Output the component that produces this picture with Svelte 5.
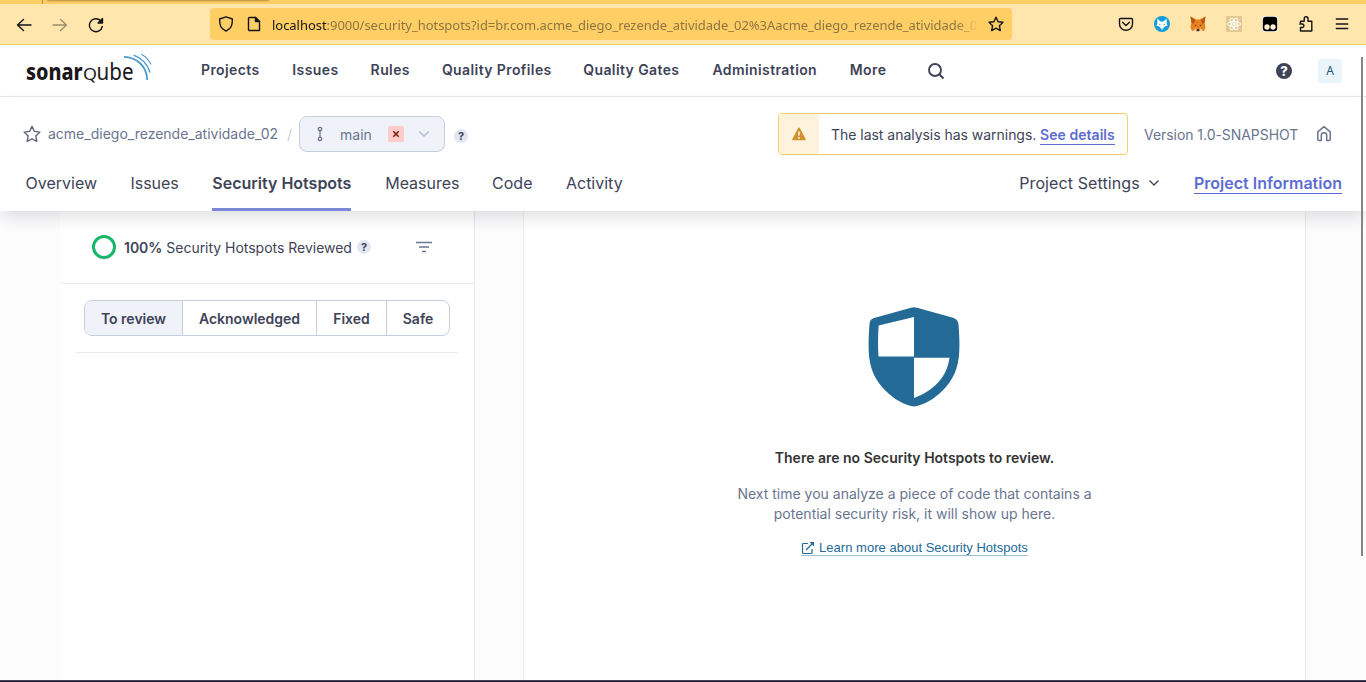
<script>
  const nav = [
    ['Projects', 59], ['Issues', 46], ['Rules', 39], ['Quality Profiles', 109],
    ['Quality Gates', 97], ['Administration', 105], ['More', 36]
  ];
  const tabs = [
    ['Overview', 71], ['Issues', 48], ['Security Hotspots', 139], ['Measures', 73], ['Code', 40], ['Activity', 57]
  ];
  const filters = [['To review', 97], ['Acknowledged', 134], ['Fixed', 70], ['Safe', 63]];
  const star = 'M8 1.2l2.1 4.5 4.9.6-3.6 3.4.9 4.9L8 12.2l-4.3 2.4.9-4.9L1 6.3l4.9-.6z';
</script>

<div class="page">
  <div class="tabstrip"><i></i><b></b></div>
  <div class="toolbar">
    <svg class="back" width="16" height="16" viewBox="0 0 16 16"><path d="M15 8H1.5M7.500 2.500L1.500 8l6 5.500" /></svg>
    <svg class="forward" width="16" height="16" viewBox="0 0 16 16"><path d="M1 8h13.5M8.500 2.500l6 5.500-6 5.500" /></svg>
    <svg class="reload" width="16" height="16" viewBox="0 0 16 16"><path d="M14.300 9.500A6.500 6.500 0 1 1 12.500 3.600" /><path class="solid" d="M14.500 1.500v4.500H10z" /></svg>
    <div class="urlbar">
      <svg width="16" height="16" viewBox="0 0 16 16"><path d="M8 .8L14.400 3c0 6-.6 9.500-6.400 12.200C2.200 12.500 1.600 9 1.600 3z" /></svg>
      <svg class="doc" width="16" height="16" viewBox="0 0 16 16"><path d="M3.500 1.500h6l4 4v9h-10a1 1 0 0 1-1-1v-11a1 1 0 0 1 1-1z" /><path class="solid" d="M9.500 1.500v4h4z" /></svg>
      <span class="url"><em>localhost</em>:9000/security_hotspots?id=br.com.acme_diego_rezende_atividade_02%3Aacme_diego_rezende_atividade_0</span>
      <svg class="bookmark" width="16" height="16" viewBox="0 0 16 16"><path d={star} /></svg>
    </div>
    <div class="extensions">
      <svg width="16" height="16" viewBox="0 0 16 16"><path d="M2.500 2.500h11a1 1 0 0 1 1 1V8a6.500 6.200 0 0 1-13 0V3.500a1 1 0 0 1 1-1zM4.500 6.300L8 9.500l3.500-3.200" /></svg>
      <svg width="16" height="16" viewBox="0 0 16 16"><circle class="plain" cx="8" cy="8" r="8" fill="#129bdb" /><path class="plain" fill="#fff" d="M3.300 2.500L6.500 5.500h3l3.200-3V8l1 1.500-3 1L8 14l-2.700-3.500-3-1 1-1.500z" /><path class="plain" fill="#129bdb" d="M4.800 7.500l2.200 1.500-1.200.6zM11.200 7.500L9 9l1.200.6zM7.400 11.800h1.200L8 13z" /></svg>
      <svg width="16" height="16" viewBox="0 0 16 16"><path class="plain" fill="#e8821e" d="M.5.5l6 3h3l6-3-.8 6 .8 5-1.500 3.500-3.500-1L9 15.500H7L5.500 14 2 15 .5 11.500l.8-5z" /><path class="plain" fill="#b85319" d="M.5.5l4.800 3.700L3.500 8l-2-1.500zM15.500.5l-4.800 3.700L12.500 8l2-1.500z" /><path class="plain" fill="#efc5a0" d="M3.500 14l2.500-2 1 3zM12.500 14L10 12l-1 3z" /><path class="plain" fill="#29313b" d="M4.500 8.500l2 1-1 .7zM11.500 8.500l-2 1 1 .7zM7 13h2l.5 2h-3z" /></svg>
      <svg width="16" height="16" viewBox="0 0 16 16"><path class="plain" fill="#e2c98f" d="M0 0h16v16H0z" /><g class="atom"><ellipse cx="8" cy="8" rx="6.500" ry="2.500" /><ellipse cx="8" cy="8" rx="6.500" ry="2.500" transform="rotate(60 8 8)" /><ellipse cx="8" cy="8" rx="6.500" ry="2.500" transform="rotate(120 8 8)" /></g><circle class="plain" cx="8" cy="8" r="1.400" fill="#fff" /></svg>
      <svg width="16" height="16" viewBox="0 0 16 16"><rect class="plain" width="16" height="16" rx="3" fill="#fff" /><rect class="plain" x=".8" y=".8" width="14.400" height="14.400" rx="3" fill="#000" /><circle class="plain" cx="5" cy="11" r="2.700" fill="#fff0cf" /><circle class="plain" cx="11" cy="11" r="2.700" fill="#fff0cf" /></svg>
      <svg width="16" height="16" viewBox="0 0 16 16"><path d="M2.500 7.200V5.300h3.700V2.700a1.900 1.900 0 0 1 3.800 0v2.600h3.800v9.700H2.500v-3.500h1.700a1.700 1.700 0 0 0 0-3.500H1.800" /></svg>
      <svg width="16" height="16" viewBox="0 0 16 16"><path d="M2.300 3h11.400M2.300 8h11.400M2.300 12.500h11.400" /></svg>
    </div>
  </div>

  <header class="global">
    <svg class="logo" width="128" height="36" viewBox="0 0 128 36">
      <text class="heavy" x="1" y="29" textLength="56.500" lengthAdjust="spacingAndGlyphs">sonar</text>
      <text class="round" x="58" y="29" textLength="14" lengthAdjust="spacingAndGlyphs">Q</text>
      <text x="71.500" y="29" textLength="37" lengthAdjust="spacingAndGlyphs">ube</text>
      <g><path stroke-width="1.800" d="M99 5.800C112 6.200 122 15.500 122.200 29" /><path stroke-width="1.400" d="M108.500 4.200C116.500 7 122.500 13 125 21.500" /><path stroke-width="1.100" d="M116.500 3.300C121 6 124 9.500 126 13.500" /></g>
    </svg>
    <nav>{#each nav as [label, width]}<a style:width="{width}px">{label}</a>{/each}</nav>
    <svg class="search" width="18" height="18" viewBox="0 0 18 18"><circle cx="8" cy="8" r="6" /><path d="M12.500 12.500L16.500 16.500" /></svg>
    <span class="help">?</span>
    <span class="avatar">A</span>
  </header>

  <section class="project">
    <div class="crumbs">
      <svg class="fav" width="18" height="18" viewBox="0 0 16 16"><path d={star} /></svg>
      <span class="name">acme_diego_rezende_atividade_02</span>
      <span class="slash">/</span>
      <div class="branch">
        <svg class="fork" width="8" height="16" viewBox="0 0 8 16"><circle cx="4" cy="3" r="1.700" /><circle cx="4" cy="13" r="1.700" /><path d="M4 4.700v6.600" /></svg>
        <span>main</span>
        <i class="failed"><svg width="8" height="8" viewBox="0 0 8 8"><path d="M1.300 1.300l5.400 5.400M6.700 1.300L1.300 6.700" /></svg></i>
        <svg class="chev" width="12" height="8" viewBox="0 0 12 8"><path d="M1.200 1.500L6 6l4.800-4.500" /></svg>
      </div>
      <span class="hint">?</span>
      <div class="warning">
        <div class="mark"><svg width="14" height="14" viewBox="0 0 14 14"><path fill="#d0932f" d="M6.300.8a.8.8 0 0 1 1.400 0l5.900 11.300a.8.8 0 0 1-.7 1.200H1.100a.8.800 0 0 1-.7-1.200z" /><path stroke="#fdf3dc" stroke-width="1.600" d="M7 4.500v4M7 10v1.700" /></svg></div>
        <p>The last analysis has warnings.</p><a>See details</a>
      </div>
      <span class="version">Version 1.0-SNAPSHOT</span>
      <svg class="home" width="16" height="18" viewBox="0 0 16 18"><path d="M1.800 6.800L8 1.700l6.200 5.100v7.700a1 1 0 0 1-1 1h-2.500V10.500A2.700 2.700 0 0 0 5.300 10.500v5H2.800a1 1 0 0 1-1-1z" /></svg>
    </div>
    <div class="tabs">
      {#each tabs as [label, width]}<a class:active={label === 'Security Hotspots'} style:width="{width}px">{label}</a>{/each}
      <span class="settings">Project Settings</span>
      <svg class="down" width="12" height="8" viewBox="0 0 12 8"><path d="M1.500 1.500L6 6l4.500-4.500" /></svg>
      <a class="info">Project Information</a>
    </div>
  </section>

  <main>
    <aside>
      <div class="reviewed"><i class="ring"></i><span><strong>100%</strong> Security Hotspots Reviewed</span><span class="hint">?</span>
        <svg width="16" height="12" viewBox="0 0 16 12"><path d="M0 1.500h16M3 6h10M6 10.500h4" /></svg>
      </div>
      <div class="toggles">{#each filters as [label, width], i}<span class:selected={i === 0} style:width="{width}px">{label}</span>{/each}</div>
      <hr />
    </aside>
    <article>
      <svg class="shield" width="92" height="100" viewBox="0 0 92 100"><path fill="#236a97" d="M43 .8q3-1 6 0L85 10.700q5 1.500 5.500 6.500C93 50 91 64 78 80 69 90 60 96 49 99q-3 .8-6 0C32 96 23 90 14 80 1 64-1 50 1.500 17.200 2 12.200 4 11.700 7 10.700z" /><path fill="#fff" d="M46 10v39.500H10.500C9.800 40 10 30 10.600 18.500zM46 50.700h35.500C79 70 66 83.500 46 91z" /></svg>
      <h3>There are no Security Hotspots to review.</h3>
      <p><span>Next time you analyze a piece of code that contains a</span><br /><span>potential security risk, it will show up here.</span></p>
      <a><svg width="14" height="14" viewBox="0 0 14 14"><path d="M7 2.500H2.500a1 1 0 0 0-1 1v8a1 1 0 0 0 1 1h7.500a1 1 0 0 0 1-1V8M5 9l6-6" /><path class="tip" d="M8.500 1H13v4.500z" /></svg>Learn more about Security Hotspots</a>
    </article>
  </main>
  <footer></footer>
  <div class="scroll"></div>
</div>

<style>
  :global(body) { margin: 0; overflow: hidden; }
  * { box-sizing: border-box; }
  .page { position: relative; width: 1366px; height: 682px; overflow: hidden; display: flex; flex-direction: column; background: #fcfcfd; font-family: Inter, sans-serif; color: #3e4357; white-space: nowrap; }
  svg { display: block; flex: none; fill: none; }
  i { font-style: normal; }
  .tabstrip { height: 4px; flex: none; background: #ffcf66; display: flex; }
  .tabstrip i { width: 43px; height: 4px; border-right: 1px solid #b38e42; }
  .tabstrip b { width: 220px; margin-left: 5px; height: 0; box-shadow: 0 0 2px 1px #b08a3c; }
  .toolbar { height: 41px; flex: none; background: #ffe6ac; border-bottom: 1px solid #ffcf66; display: flex; align-items: center; padding-left: 16px; }
  .toolbar svg { stroke: #15141a; stroke-width: 1.4; stroke-linejoin: round; stroke-linecap: round; }
  .toolbar .solid { fill: #15141a; }
  .toolbar .plain { stroke: none; }
  .toolbar .atom { stroke: #fff; stroke-width: 1; }
  .toolbar .back, .toolbar .forward, .toolbar .reload { margin-top: 1px; }
  .forward { margin-left: 20px; opacity: .42; }
  .reload { margin-left: 20px; }
  .urlbar { width: 802px; height: 32px; margin-left: 106px; padding: 0 8px; border-radius: 4px; background: #ffcf66; display: flex; align-items: center; }
  .urlbar .doc { margin-left: 12px; }
  .url { margin-left: 10px; width: 706px; overflow: hidden; font: 13px/20px "Noto Sans", sans-serif; letter-spacing: -.04px; color: #8d7543; padding-top: 2px; mask-image: linear-gradient(90deg, #000 97%, transparent); }
  .url em { font-style: normal; color: #15141a; }
  .bookmark { margin-left: 10px; }
  .extensions { display: flex; gap: 20px; margin-left: 106px; }
  .global { height: 52px; flex: none; background: #fff; border-bottom: 1px solid #e6e7ea; display: flex; align-items: center; padding: 0 24px 0 25px; }
  .logo { margin-top: -3px; overflow: visible; }
  .logo text { font: 400 23px "Noto Sans", sans-serif; fill: #1b171b; }
  .logo .heavy { font-weight: 800; }
  .logo .round { font-size: 17px; }
  .logo g { stroke: #4e9bcd; }
  nav { display: flex; gap: 32.300px; margin: -2px 0 0 48px; font-size: 14px; font-weight: 600; letter-spacing: .4px; line-height: 20px; }
  .search { margin: 1px 0 0 41px; stroke: #3e4357; stroke-width: 1.900; }
  .help { width: 16px; height: 16px; margin-left: auto; border-radius: 50%; background: #3e4357; color: #fff; font-size: 13px; line-height: 16px; font-weight: 800; text-align: center; }
  .avatar { margin-left: 26px; width: 24px; height: 24px; border-radius: 3px; background: #e9f4fb; color: #23566f; font: 12px/24px "Noto Sans", sans-serif; text-align: center; }
  .project { height: 114px; flex: none; background: #fff; box-shadow: 0 8px 16px -2px rgba(30, 30, 40, .14); position: relative; }
  .crumbs { height: 74px; padding: 0 34px 0 23px; display: flex; align-items: center; font-size: 14px; color: #6a7590; }
  .fav { stroke: #5c6275; stroke-width: 1.200; stroke-linejoin: round; }
  .name { width: 230px; margin-left: 7px; letter-spacing: 0; margin-top: -1px; }
  .slash { width: 5px; margin-left: 9px; color: #c9ced6; }
  .branch { width: 146px; height: 36px; margin-left: 7px; border: 1px solid #c5cddf; border-radius: 8px; background: #eff2f9; display: flex; align-items: center; padding-left: 16px; }
  .fork { stroke: #6a7590; stroke-width: 1.300; }
  .branch span { width: 32px; margin-left: 16px; }
  .failed { width: 16px; height: 16px; margin-left: 16px; display: grid; place-items: center; border-radius: 2px; background: #fecdca; }
  .failed svg { stroke: #801b14; stroke-width: 1.600; }
  .chev { margin-left: 14px; stroke: #b4bbce; stroke-width: 1.300; }
  .hint { width: 14px; height: 14px; margin-left: 9px; border-radius: 50%; background: #e1e6f3; color: #3e4357; font-size: 11px; line-height: 14px; font-weight: 700; text-align: center; }
  .crumbs .hint { margin-top: 4px; }
  .warning { width: 350px; height: 42px; margin-left: auto; border: 1px solid #f8cf68; border-radius: 4px; background: #fff; color: #3e4357; display: flex; align-items: center; overflow: hidden; }
  .mark { width: 40px; height: 100%; background: #fdf3dc; display: grid; place-items: center; }
  .warning p { margin: 0 5px 0 12px; width: 204px; padding-top: 1px; letter-spacing: -.03px; }
  .warning a { width: 75px; margin-top: 1px; color: #5d6cd0; font-weight: 600; letter-spacing: .05px; border-bottom: 1px solid #5d6cd0; line-height: 19px; }
  .version { width: 153px; margin-left: 16px; letter-spacing: -.05px; }
  .home { margin-left: 19px; margin-top: -1px; stroke: #6a7590; stroke-width: 1.500; stroke-linejoin: round; }
  .tabs { height: 40px; padding: 0 24px 0 25.500px; display: flex; font-size: 16px; line-height: 24px; gap: 33.900px; }
  .tabs a { height: 40px; }
  .tabs .active { font-weight: 600; border-bottom: 3px solid #7b87d9; }
  .tabs .settings { margin-left: auto; width: 121px; letter-spacing: .1px; }
  .down { margin: 8px 0 0 -26px; stroke: #3e4357; stroke-width: 1.300; }
  .tabs .info { height: 23px; width: 148px; color: #5d6cd0; font-weight: 600; border-bottom: 1px solid #5d6cd0; }
  main { flex: 1; display: flex; padding-left: 60px; min-height: 0; }
  aside { width: 415px; background: #fff; border-right: 1px solid #e1e6f3; }
  .reviewed { height: 73px; border-bottom: 1px solid #ebebeb; display: flex; align-items: center; padding-left: 32px; font-size: 14px; }
  .ring { width: 24px; height: 24px; margin-right: 8px; border: 3px solid #19b66b; border-radius: 50%; }
  .reviewed > span:nth-child(2) { width: 228px; letter-spacing: -.02px; padding-top: 1px; }
  .reviewed strong { font-weight: 600; }
  .reviewed .hint { margin-left: 5px; }
  .reviewed svg { margin-left: 45px; stroke: #6a7590; stroke-width: 1.500; }
  .toggles { width: 366px; height: 36px; margin: 16px 0 0 24px; border: 1px solid #c5cddf; border-radius: 8px; overflow: hidden; display: flex; font-size: 14px; font-weight: 600; line-height: 36px; text-align: center; }
  .toggles span { border-left: 1px solid #c5cddf; }
  .toggles .selected { border: 0; background: #eff2f9; }
  hr { width: 382px; height: 1px; border: 0; margin: 16px 0 0 16px; background: #ebebeb; }
  article { width: 783px; margin-left: 48px; background: #fff; border: solid #ebebeb; border-width: 0 1px; display: flex; flex-direction: column; align-items: center; padding-top: 96px; }
  .shield { margin-left: -1px; }
  h3 { margin: 41px 0 0; font-size: 14px; line-height: 20px; font-weight: 600; color: #333; }
  article p { margin: 16px 0 0; font-size: 14px; line-height: 20px; color: #6a7590; text-align: center; }
  article a { margin-top: 15px; height: 17px; padding-top: 1px; font: 13px/16px "Liberation Sans", sans-serif; color: #236a97; border-bottom: 1px solid #9fbfd2; display: flex; align-items: center; gap: 4px; letter-spacing: .02px; }
  article a svg { stroke: #236a97; stroke-width: 1.200; }
  article a .tip { fill: #236a97; stroke: none; }
  footer { height: 2px; flex: none; background: #1e1a34; border-top: 1px solid #47445a; }
  .scroll { position: absolute; left: 1361px; top: 57px; width: 2px; height: 499px; background: #858585; }
</style>
